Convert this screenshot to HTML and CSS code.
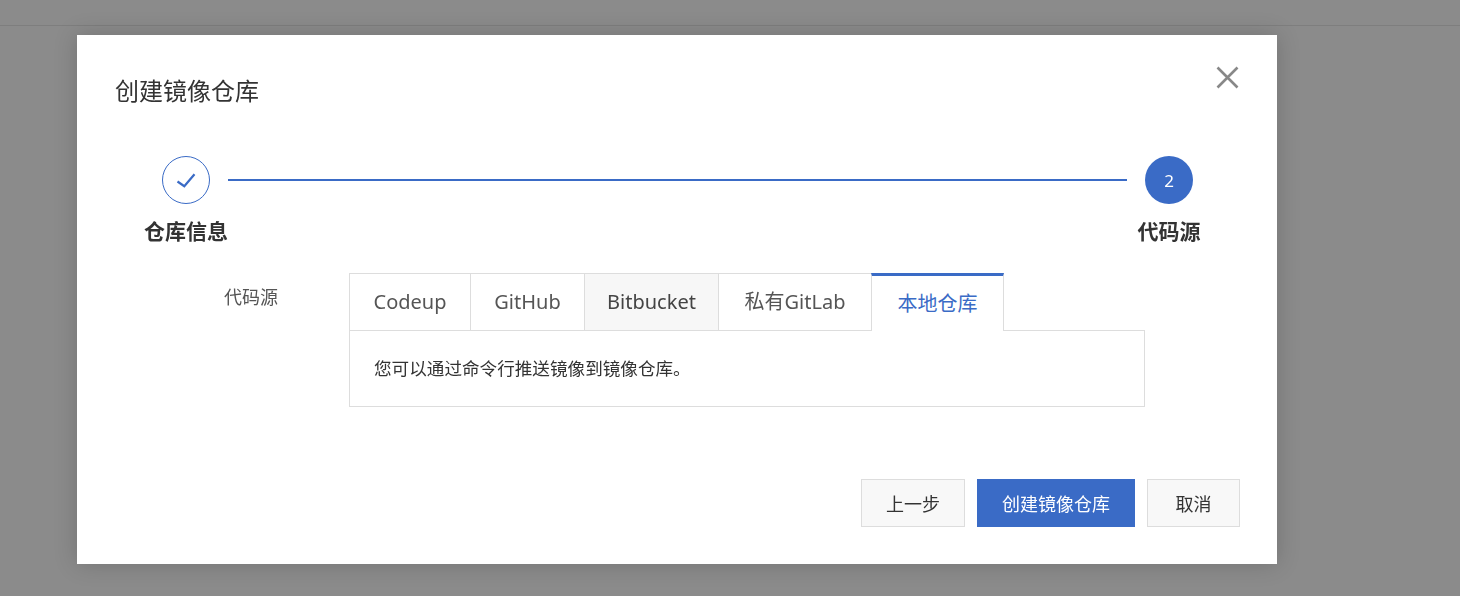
FILE: index.html
```html
<!DOCTYPE html>
<html lang="zh">
<head>
<meta charset="utf-8">
<title>创建镜像仓库</title>
<link rel="stylesheet" href="styles.css">
</head>
<body>
<div class="page-header"></div>
<div class="overlay">
  <div class="modal">
    <button class="close" aria-label="关闭">
      <svg width="23" height="23" viewBox="0 0 23 23"><path d="M1.5 1.5L21.5 21.5M21.5 1.5L1.5 21.5" stroke="#888" stroke-width="2.6" fill="none"/></svg>
    </button>
    <h2 class="title">创建镜像仓库</h2>
    <div class="steps">
      <div class="step">
        <div class="circle done">
          <svg width="48" height="48" viewBox="0 0 48 48"><path d="M15.5 25.5L22.3 30.2L32.5 18.3" stroke="#3a6bc6" stroke-width="2.2" fill="none"/></svg>
        </div>
        <div class="step-label">仓库信息</div>
      </div>
      <div class="step-line"></div>
      <div class="step">
        <div class="circle active">2</div>
        <div class="step-label">代码源</div>
      </div>
    </div>
    <div class="form-row">
      <div class="form-label">代码源</div>
      <div class="form-control">
        <div class="tabs">
          <div class="tab tab-codeup">Codeup</div>
          <div class="tab tab-github">GitHub</div>
          <div class="tab tab-bitbucket hover">Bitbucket</div>
          <div class="tab tab-gitlab">私有GitLab</div>
          <div class="tab tab-local selected">本地仓库</div>
        </div>
        <div class="panel">您可以通过命令行推送镜像到镜像仓库。</div>
      </div>
    </div>
    <div class="footer">
      <button class="btn">上一步</button>
      <button class="btn primary">创建镜像仓库</button>
      <button class="btn cancel">取消</button>
    </div>
  </div>
</div>
</body>
</html>
```
FILE: styles.css
```css
* { box-sizing: border-box; }
html, body {
  margin: 0;
  padding: 0;
  height: 100%;
}
body {
  background: #8b8b8b;
  font-family: "Noto Sans", "Noto Sans CJK SC", sans-serif;
  color: #333;
  overflow: hidden;
}
.page-header {
  height: 26px;
  border-bottom: 1px solid #7e7e7e;
  background: #8b8b8b;
}
.overlay {
  position: fixed;
  inset: 0;
  padding: 35px 0 0 77px;
}
.modal {
  position: relative;
  width: 1200px;
  background: #fff;
  box-shadow: 0 0 22px rgba(0, 0, 0, 0.18);
  padding: 40px 37px 37px 38px;
}
.close {
  position: absolute;
  top: 31px;
  right: 38px;
  padding: 0;
  border: 0;
  background: none;
  width: 23px;
  height: 23px;
  display: block;
}
.close svg { display: block; }
.title {
  margin: 0;
  font-size: 24px;
  line-height: 32px;
  font-weight: normal;
  color: #333;
}
.steps {
  display: flex;
  margin: 49px 47px 0 47px;
}
.step {
  width: 48px;
  display: flex;
  flex-direction: column;
  align-items: center;
}
.circle {
  width: 48px;
  height: 48px;
  border-radius: 50%;
  flex: none;
  display: flex;
  align-items: center;
  justify-content: center;
}
.circle.done {
  border: 1px solid #3a6bc6;
  position: relative;
}
.circle.done svg {
  position: absolute;
  left: -1px;
  top: -1px;
}
.circle.active {
  background: #3a6bc6;
  color: #fff;
  font-size: 17px;
}
.step-label {
  white-space: nowrap;
  margin-top: 13px;
  font-size: 21px;
  line-height: 28px;
  font-weight: bold;
  color: #333;
}
.step-line {
  flex: 1;
  height: 2px;
  background: #3a6bc6;
  margin: 23px 18px 0;
}
.form-row {
  display: flex;
  margin-top: 28px;
}
.form-label {
  width: 234px;
  padding: 12px 0 0 109px;
  font-size: 18px;
  line-height: 24px;
  color: #555;
}
.form-control {
  width: 796px;
}
.tabs {
  display: flex;
  align-items: flex-end;
}
.tab {
  height: 57px;
  border: 1px solid #ddd;
  border-bottom: 0;
  margin-left: -1px;
  padding: 0;
  text-align: center;
  font-size: 20px;
  line-height: 56px;
  color: #555;
  background: #fff;
  white-space: nowrap;
}
.tab:first-child { margin-left: 0; }
.tab-codeup { width: 122px; }
.tab-github { width: 115px; }
.tab-bitbucket { width: 135px; }
.tab-gitlab { width: 154px; }
.tab-local { width: 133px; }
.tab.hover { background: #f7f7f7; color: #444; }
.tab.selected {
  position: relative;
  z-index: 1;
  height: 58px;
  margin-bottom: -1px;
  border-top: 3px solid #3a6bc6;
  line-height: 55px;
  color: #3a6bc6;
  background: #fff;
}
.panel {
  border: 1px solid #ddd;
  padding: 25px 24px;
  font-size: 17.6px;
  line-height: 25px;
  color: #333;
}
.footer {
  display: flex;
  justify-content: flex-end;
  gap: 12px;
  margin-top: 72px;
}
.btn {
  height: 48px;
  padding: 0 24px;
  border: 1px solid #ddd;
  background: #f8f8f8;
  font-family: "Noto Sans", "Noto Sans CJK SC", sans-serif;
  font-size: 18px;
  color: #333;
}
.btn.cancel { min-width: 93px; }
.btn.primary {
  background: #3a6bc6;
  border-color: #3a6bc6;
  color: #fff;
}
```
